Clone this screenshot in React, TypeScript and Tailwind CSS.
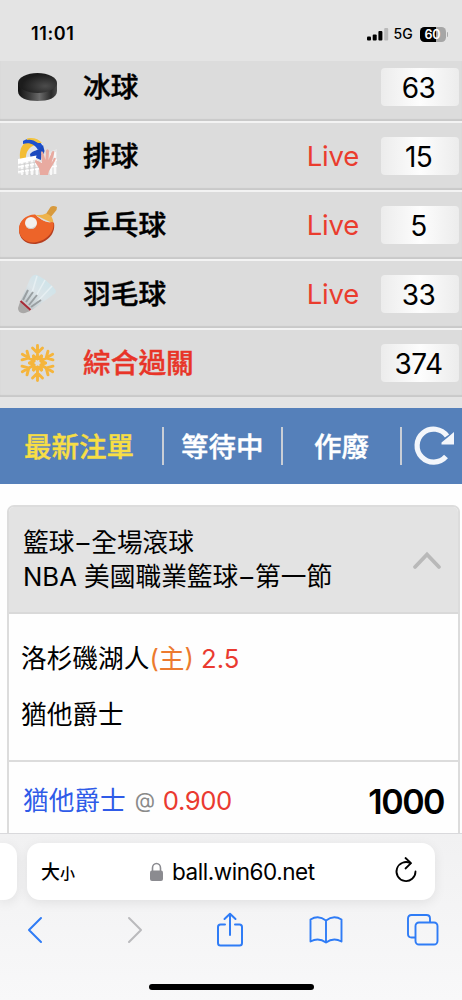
import type { ReactNode } from 'react';

const uiFont = "font-['Inter','Noto_Sans_CJK_TC',sans-serif]";

function Puck() {
  return (
    <svg width="40" height="40" viewBox="0 0 40 40">
      <defs>
        <linearGradient id="puckSide" x1="0" x2="1" y1="0" y2="0">
          <stop offset="0" stopColor="#111" />
          <stop offset="0.3" stopColor="#3c3c3c" />
          <stop offset="0.55" stopColor="#6b6b6b" />
          <stop offset="0.85" stopColor="#2a2a2a" />
          <stop offset="1" stopColor="#4a4a4a" />
        </linearGradient>
        <radialGradient id="puckTop" cx="0.7" cy="0.65" r="0.6">
          <stop offset="0" stopColor="#4c4c4c" />
          <stop offset="1" stopColor="#1c1c1c" />
        </radialGradient>
      </defs>
      <path d="M1 16 V24 C1 31 10 34 20.500 34 C31 34 40 31 40 24 V16 Z" fill="url(#puckSide)" />
      <ellipse cx="20.500" cy="16" rx="19.500" ry="10" fill="url(#puckTop)" />
    </svg>
  );
}

function Volleyball() {
  return (
    <svg width="40" height="40" viewBox="0 0 40 40">
      <path d="M3 22 C2 10 8 2 16 2 C22 2 27 7 27 14 L20 26 H4 Z" fill="#dfe3ea" />
      <path d="M3 23 C2 12 6 6 12 6 L18 9 C12 11 8.500 16 9 23 Z" fill="#f3bd35" />
      <path d="M6 5 C14 0 24 4 26 11 L21 14 C18 8 12 6 6 8 Z" fill="#1d50ce" />
      <path d="M10 2.500 C16 1 22 3 25 7 L21 7 C17 4 13 3 10 4 Z" fill="#f2c443" />
      <path d="M13 18 C17 14 19 15 22 13 L26 9 L27.500 15 L24 25 H14 Z" fill="#1b49be" />
      <path d="M1 25 L24 19 L40 13 V38 H1 Z" fill="#e6e6e6" />
      <path d="M1 23 L22 19 V22.500 L1 28 Z" fill="#fff" />
      <path d="M20 16 L25 13 L24 24 L19 22 Z" fill="#1b49be" />
      <path d="M1 31 L40 24 M1 36 L40 30 M5 26 V39 M10 25 V39 M15 24 V39 M20 24 V39 M34 18 V39 M38 16 V38" stroke="#fff" strokeWidth="1.500" />
      <path d="M2 29 L20 26 M2 34 L22 31 M7.500 27 V39 M12.500 26 V39 M17.500 26 V39" stroke="#cfcfcf" strokeWidth="0.700" />
      <path d="M23 39 L22 32 L18 26 Q18 23 20 24.500 L25 27 L24 17 Q24 14 26 16 L28.500 24 L29 14.500 Q31 12 32 15 L31.500 24 L35 15.500 Q38 14 37 18 L34.500 27 L37 22 Q40 21 38 25 L32 35 L31 39 Z" fill="#e8aaa0" />
    </svg>
  );
}

function Paddle() {
  return (
    <svg width="40" height="40" viewBox="0 0 40 40">
      <path d="M27 12 L33.500 2 Q36 0 40 2 L39.500 5 L33 13 Z" fill="#d89a3d" />
      <path d="M17 9.500 Q24 11 29 8.500 Q36 10 36.500 18.500 Z" fill="#eeb34c" />
      <path d="M18 10 C9 10 2 17 2 25 C2 33 8 39 17 39 C28 39 39 30 37 18 Q35 17 33 18 Q25 17 18 10 Z" fill="#b63f20" />
      <path d="M18 9.500 C9 9.500 2 16 2 24 C2 32 8 37.500 16 37.500 C27 37.500 38 28 36.500 17.500 Q34 17 32 17.500 Q24 16 18 9.500 Z" fill="#ed6429" />
      <circle cx="14" cy="18" r="6" fill="#f2f1ef" />
      <path d="M9 21 Q14 25.500 19 20.500 Q18 24 14 24 Q10 24 9 21" fill="#cdc7c2" />
    </svg>
  );
}

function Shuttlecock() {
  return (
    <svg width="40" height="40" viewBox="0 0 40 40">
      <defs>
        <linearGradient id="feather" x1="0.2" y1="0.9" x2="0.8" y2="0.2">
          <stop offset="0" stopColor="#c3cacd" />
          <stop offset="0.5" stopColor="#dbe4e8" />
          <stop offset="1" stopColor="#cfe4ea" />
        </linearGradient>
      </defs>
      <path d="M4 26 L13 5 Q16 0 20 1 L27 5 L34 11 Q40 16 38.500 19 L15 36 Z" fill="url(#feather)" />
      <path d="M20 2 L14 22 M28 6 L18 24 M35 12 L21 27" stroke="#e6eff2" strokeWidth="1.500" fill="none" />
      <path d="M6 26 L11 16 M9 28 L16 18 M12 31 L20 21 M14 33 L24 26" stroke="#999fa2" strokeWidth="2" />
      <path d="M3 28 L13 37 L8 39 Q1 40 1 34 Z" fill="#a9a8a7" />
      <path d="M3.500 27 L13.500 36" stroke="#a52b37" strokeWidth="2.200" />
    </svg>
  );
}

function Snowflake() {
  return (
    <svg width="40" height="40" viewBox="0 0 40 40" fill="none" stroke="#f5b53c" strokeWidth="2.900" strokeLinecap="round">
      {[0, 60, 120, 180, 240, 300].map((a) => (
        <path key={a} d="M20.500 16 V2.500 M15.500 5 L20.500 10 L25.500 5 M16.500 13 L20.500 16 L24.500 13" transform={`rotate(${a} 20.500 20)`} />
      ))}
      <circle cx="20.500" cy="20" r="4.500" strokeWidth="2.500" />
    </svg>
  );
}

type Sport = { name: string; count: string; live?: boolean; icon: ReactNode; red?: boolean };

const sports: Sport[] = [
  { name: '冰球', count: '63', icon: <Puck /> },
  { name: '排球', count: '15', live: true, icon: <Volleyball /> },
  { name: '乒乓球', count: '5', live: true, icon: <Paddle /> },
  { name: '羽毛球', count: '33', live: true, icon: <Shuttlecock /> },
  { name: '綜合過關', count: '374', icon: <Snowflake />, red: true },
];

function SportRow({ sport }: { sport: Sport }) {
  return (
    <div className="flex h-[69px] shrink-0 items-center border-b-2 border-[#f3f3f3] bg-[#dcdcdc] pr-[3px] pb-[1px] pl-[17px] shadow-[inset_0_-2px_1px_#c9c9c9] last:border-[#e4e4e4]">
      <div className="w-[66px] shrink-0">{sport.icon}</div>
      <div className={`flex-1 pb-[1px] text-[27.7px] leading-[40px] font-medium [-webkit-text-stroke:0.4px_currentColor] ${sport.red ? 'text-[#e83428]' : 'text-black'}`}>{sport.name}</div>
      {sport.live && <div className="mr-[22px] pb-[1px] text-[27.5px] leading-[38px] font-normal tracking-[-0.2px] text-[#ea3c2e]">Live</div>}
      <div className="flex h-[38px] w-[78px] items-center justify-center rounded-[4px] bg-linear-to-r from-[#ececec] via-[#fdfdfd] to-[#ececec] pt-[2px] pr-[3px] text-[28px] leading-[38px] tracking-[-0.6px]">
        {sport.count}
      </div>
    </div>
  );
}

function Divider() {
  return <div className="h-[38px] w-[2px] shrink-0 bg-[#c9ced6]" />;
}

function Dash() {
  return <span className="px-[2px]">–</span>;
}

export default function App() {
  return (
    <div className={`flex h-[1000px] w-[462px] flex-col overflow-hidden bg-white text-black ${uiFont}`}>
      <header className="flex h-[61px] shrink-0 items-center bg-[#e4e4e4] pt-[7px] pr-[14px] pl-[31px]">
        <div className="flex-1 text-[18px] leading-[22px] font-semibold tracking-[0.6px]">11:01</div>
        <svg width="22" height="14" viewBox="0 0 22 14">
          <rect x="0" y="9.500" width="4" height="4" rx="1" />
          <rect x="5.700" y="7.500" width="4" height="6" rx="1" />
          <rect x="11.400" y="4" width="4" height="9.500" rx="1" />
          <rect x="17.200" y="1" width="4" height="12.500" rx="1" fill="#b9b9b9" />
        </svg>
        <div className="ml-[5px] w-[26px] text-[14px] leading-[18px] font-medium">5G</div>
        <div className="flex h-[15px] w-[26px] items-center justify-center rounded-[4.500px] bg-linear-to-r from-black from-60% to-[#a6a6a6] to-60% text-[12.5px] leading-[15px] font-semibold text-white">60</div>
        <div className="ml-[1px] h-[5px] w-[1.500px] rounded-r bg-[#aaa]" />
      </header>

      <section className="flex h-[347px] shrink-0 flex-col overflow-hidden bg-[#e4e4e4]">
        <div className="-mt-[7px]">
          {sports.map((s) => (
            <SportRow key={s.name} sport={s} />
          ))}
        </div>
      </section>

      <nav className="flex h-[76px] shrink-0 items-center bg-[#5580ba] text-[27.5px] leading-[40px] font-medium text-white [-webkit-text-stroke:0.4px_currentColor]">
        <div className="w-[162px] pt-[1px] pl-[24px] text-[#f7de45]">最新注單</div>
        <Divider />
        <div className="w-[117px] pt-[1px] pl-[17px]">等待中</div>
        <Divider />
        <div className="w-[117px] pt-[1px] pl-[31px]">作廢</div>
        <Divider />
        <svg className="ml-[11px]" width="42" height="42" viewBox="0 0 42 42">
          <path d="M33 31.500 A16.500 16.500 0 1 1 34 11" fill="none" stroke="#f3f6fb" strokeWidth="5.200" />
          <path d="M41 7 V19.500 H28.500 V17.500 L34 13 Z" fill="#f3f6fb" />
        </svg>
      </nav>

      <main className="h-[349px] shrink-0 overflow-hidden bg-[#fefefe] pt-[21px] pr-[2px] pl-[7px]">
        <article className="h-[400px] rounded-t-[7px] border-2 border-[#dcdcdc]">
          <div className="flex h-[107px] items-center justify-between rounded-t-[5px] border-b-2 border-[#d9d9d9] bg-[#e3e3e3] pr-[16px] pl-[14px]">
            <div className="pt-[1px] text-[25.7px] leading-[34.500px]">
              <div>籃球<Dash />全場滾球</div>
              <div>NBA 美國職業籃球<Dash />第一節</div>
            </div>
            <svg width="30" height="20" viewBox="0 0 30 20">
              <path d="M3 17 L15 4.500 L27 17" fill="none" stroke="#b9b9b9" strokeWidth="3.800" strokeLinecap="round" />
            </svg>
          </div>
          <div className="h-[148px] border-b-2 border-[#dcdcdc] pt-[26px] pl-[12px] text-[25.7px] leading-[38px]">
            <div>洛杉磯湖人<span className="text-[#ec7a2e]">(主)</span> <span className="text-[#ea3a30]">2.5</span></div>
            <div className="mt-[18px]">猶他爵士</div>
          </div>
          <div className="flex h-[78px] items-center justify-between pr-[14px] pl-[14px] text-[25.7px] leading-[38px]">
            <div className="flex items-center">
              <span className="text-[#2f5be8]">猶他爵士</span>
              <span className="ml-[9px] w-[28px] pb-[1px] text-[21px] text-[#8a8a8a]">@</span>
              <span className="tracking-[-0.4px] text-[#ea3a30]">0.900</span>
            </div>
            <div className="pt-[2px] text-[34px] font-semibold tracking-[-1.5px]">1000</div>
          </div>
        </article>
      </main>

      <footer className="flex h-[167px] shrink-0 flex-col overflow-hidden border-t border-[#d9d9dc] bg-linear-to-b from-[#f1f1f2] to-[#f8f8f9]">
        <div className="mt-[9px] flex shrink-0">
          <div className="h-[57px] w-[17px] shrink-0 rounded-r-[13px] bg-white shadow-[0_3px_12px_rgba(0,0,0,0.08)]" />
          <div className="ml-[10px] flex h-[57px] w-[408px] items-center rounded-[13px] bg-white pr-[17px] pl-[14px] shadow-[0_3px_12px_rgba(0,0,0,0.08)]">
            <div className="w-[108px] pt-[3px] text-[19px] leading-[24px] font-medium">大<span className="text-[15px]">小</span></div>
            <svg width="15" height="20" viewBox="0 0 15 20">
              <path d="M3.500 10 V6 A4 4.500 0 0 1 11.500 6 V10" fill="none" stroke="#8b8b90" strokeWidth="1.600" />
              <rect x="1" y="8.500" width="13" height="10.500" rx="2" fill="#8b8b90" />
            </svg>
            <div className="ml-[8px] flex-1 text-[22.5px] leading-[30px] tracking-[-0.45px]">ball.win60.net</div>
            <svg className="-mt-[3px]" width="24" height="28" viewBox="0 0 24 28" fill="none" stroke="#000" strokeWidth="1.800" strokeLinecap="round" strokeLinejoin="round">
              <path d="M21.500 15.500 A9.500 9.500 0 1 1 16.500 7.200" />
              <path d="M11.500 2 L17 7.200 L11.500 12.500" />
            </svg>
          </div>
        </div>
        <div className="mt-[8px] flex h-[44px] shrink-0 items-center pl-[26px]">
          <svg width="18" height="28" viewBox="0 0 18 28"><path d="M15 2 L3 14 L15 26" fill="none" stroke="#2f7cf6" strokeWidth="2" strokeLinecap="round" strokeLinejoin="round" /></svg>
          <svg className="ml-[82px]" width="18" height="28" viewBox="0 0 18 28"><path d="M3 2 L15 14 L3 26" fill="none" stroke="#bababd" strokeWidth="2" strokeLinecap="round" strokeLinejoin="round" /></svg>
          <svg className="ml-[72px]" width="28" height="36" viewBox="0 0 28 36" fill="none" stroke="#2f7cf6" strokeWidth="2" strokeLinecap="round" strokeLinejoin="round">
            <path d="M9 12.500 H4.500 Q2 12.500 2 15 V31 Q2 33.500 4.500 33.500 H23.500 Q26 33.500 26 31 V15 Q26 12.500 23.500 12.500 H19" />
            <path d="M14 23 V2 M8.500 7 L14 1.800 L19.500 7" />
          </svg>
          <svg className="ml-[65px]" width="34" height="30" viewBox="0 0 34 30" fill="none" stroke="#2f7cf6" strokeWidth="1.900" strokeLinejoin="round">
            <path d="M17 5.500 Q9.500 -0.500 1.500 4.500 V26.500 Q9.500 22 17 27.500 Q24.500 22 32.500 26.500 V4.500 Q24.500 -0.500 17 5.500 Z M17 5.500 V27.500" />
          </svg>
          <svg className="ml-[64px]" width="32" height="32" viewBox="0 0 32 32" fill="none" stroke="#2f7cf6" strokeWidth="1.900">
            <path d="M8.500 23.500 H4.500 Q1 23.500 1 20 V4.500 Q1 1 4.500 1 H19.500 Q23 1 23 4.500 V8.500" />
            <rect x="8.500" y="8.500" width="22" height="22" rx="3.500" />
          </svg>
        </div>
        <div className="mt-[32px] ml-[149px] h-[6px] w-[165px] shrink-0 rounded-full bg-black" />
      </footer>
    </div>
  );
}
